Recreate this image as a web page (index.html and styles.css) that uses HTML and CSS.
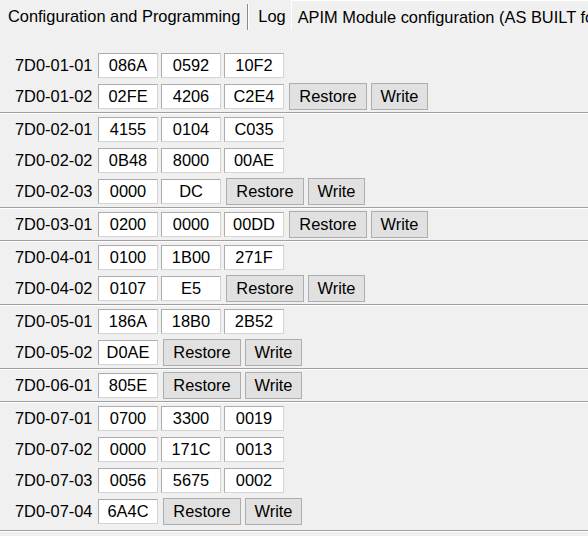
FILE: index.html
```html
<!DOCTYPE html>
<html>
<head>
<meta charset="utf-8">
<link rel="stylesheet" href="styles.css">
</head>
<body>
<div class="tabs">
  <div class="tab">Configuration and Programming</div>
  <div class="tab tab-sep">Log</div>
  <div class="tab tab-active">APIM Module configuration (AS BUILT format)</div>
</div>
<div class="panel">
  <div class="group">
    <div class="row"><span class="lbl">7D0-01-01</span><span class="fld">086A</span><span class="fld">0592</span><span class="fld">10F2</span></div>
    <div class="row"><span class="lbl">7D0-01-02</span><span class="fld">02FE</span><span class="fld">4206</span><span class="fld">C2E4</span><button class="btn btn-restore">Restore</button><button class="btn btn-write">Write</button></div>
  </div>
  <div class="group">
    <div class="row"><span class="lbl">7D0-02-01</span><span class="fld">4155</span><span class="fld">0104</span><span class="fld">C035</span></div>
    <div class="row"><span class="lbl">7D0-02-02</span><span class="fld">0B48</span><span class="fld">8000</span><span class="fld">00AE</span></div>
    <div class="row"><span class="lbl">7D0-02-03</span><span class="fld">0000</span><span class="fld">DC</span><button class="btn btn-restore">Restore</button><button class="btn btn-write">Write</button></div>
  </div>
  <div class="group">
    <div class="row"><span class="lbl">7D0-03-01</span><span class="fld">0200</span><span class="fld">0000</span><span class="fld">00DD</span><button class="btn btn-restore">Restore</button><button class="btn btn-write">Write</button></div>
  </div>
  <div class="group">
    <div class="row"><span class="lbl">7D0-04-01</span><span class="fld">0100</span><span class="fld">1B00</span><span class="fld">271F</span></div>
    <div class="row"><span class="lbl">7D0-04-02</span><span class="fld">0107</span><span class="fld">E5</span><button class="btn btn-restore">Restore</button><button class="btn btn-write">Write</button></div>
  </div>
  <div class="group">
    <div class="row"><span class="lbl">7D0-05-01</span><span class="fld">186A</span><span class="fld">18B0</span><span class="fld">2B52</span></div>
    <div class="row"><span class="lbl">7D0-05-02</span><span class="fld">D0AE</span><button class="btn btn-restore">Restore</button><button class="btn btn-write">Write</button></div>
  </div>
  <div class="group">
    <div class="row"><span class="lbl">7D0-06-01</span><span class="fld">805E</span><button class="btn btn-restore">Restore</button><button class="btn btn-write">Write</button></div>
  </div>
  <div class="group group-last">
    <div class="row"><span class="lbl">7D0-07-01</span><span class="fld">0700</span><span class="fld">3300</span><span class="fld">0019</span></div>
    <div class="row"><span class="lbl">7D0-07-02</span><span class="fld">0000</span><span class="fld">171C</span><span class="fld">0013</span></div>
    <div class="row"><span class="lbl">7D0-07-03</span><span class="fld">0056</span><span class="fld">5675</span><span class="fld">0002</span></div>
    <div class="row"><span class="lbl">7D0-07-04</span><span class="fld">6A4C</span><button class="btn btn-restore">Restore</button><button class="btn btn-write">Write</button></div>
  </div>
</div>
</body>
</html>
```
FILE: styles.css
```css
html, body {
  margin: 0;
  padding: 0;
  background: #f0f0f0;
  overflow: hidden;
}
body {
  width: 588px;
  height: 536px;
  font-family: "Liberation Sans", Arial, sans-serif;
  font-size: 16.4px;
  color: #000;
}
.tabs {
  display: flex;
  align-items: flex-end;
  height: 30px;
  white-space: nowrap;
  overflow: hidden;
}
.tab {
  height: 26px;
  line-height: 24px;
  padding: 0 7px 0 8px;
  box-sizing: border-box;
}
.tab-sep {
  border-left: 1px solid #8a8a8a;
  box-shadow: inset 1px 0 0 #fff;
  padding-left: 10px;
  padding-right: 5px;
  margin-top: 4px;
}
.tab-active {
  height: 30px;
  line-height: 32px;
  padding-left: 6px;
  border-left: 1px solid #fff;
  border-top: 1px solid #fff;
  background: #f0f0f0;
  flex: 1 1 auto;
  min-width: 0;
  overflow: hidden;
}
.panel {
  padding-top: 20px;
}
.group {
  border-bottom: 1px solid #a0a0a0;
  box-shadow: 0 1px 0 #fff;
  margin-bottom: 1px;
}
.group-last {
  padding-bottom: 3px;
}
.row {
  display: flex;
  align-items: center;
  height: 31px;
  padding-left: 15px;
}
.lbl {
  width: 77px;
  margin-right: 6px;
  white-space: nowrap;
}
.fld {
  box-sizing: border-box;
  width: 60px;
  height: 25px;
  line-height: 23px;
  margin-right: 3px;
  background: #fff;
  border: 1px solid;
  border-color: #adadad #d4d4d4 #d4d4d4 #adadad;
  text-align: center;
}
.btn {
  box-sizing: border-box;
  height: 27px;
  margin: 0 3px 0 2px;
  padding: 0;
  font: inherit;
  color: #000;
  background: #e1e1e1;
  border: 1px solid #adadad;
  border-radius: 0;
}
.btn-restore {
  width: 78px;
}
.btn-write {
  width: 57px;
  margin-left: 1px;
}
```
